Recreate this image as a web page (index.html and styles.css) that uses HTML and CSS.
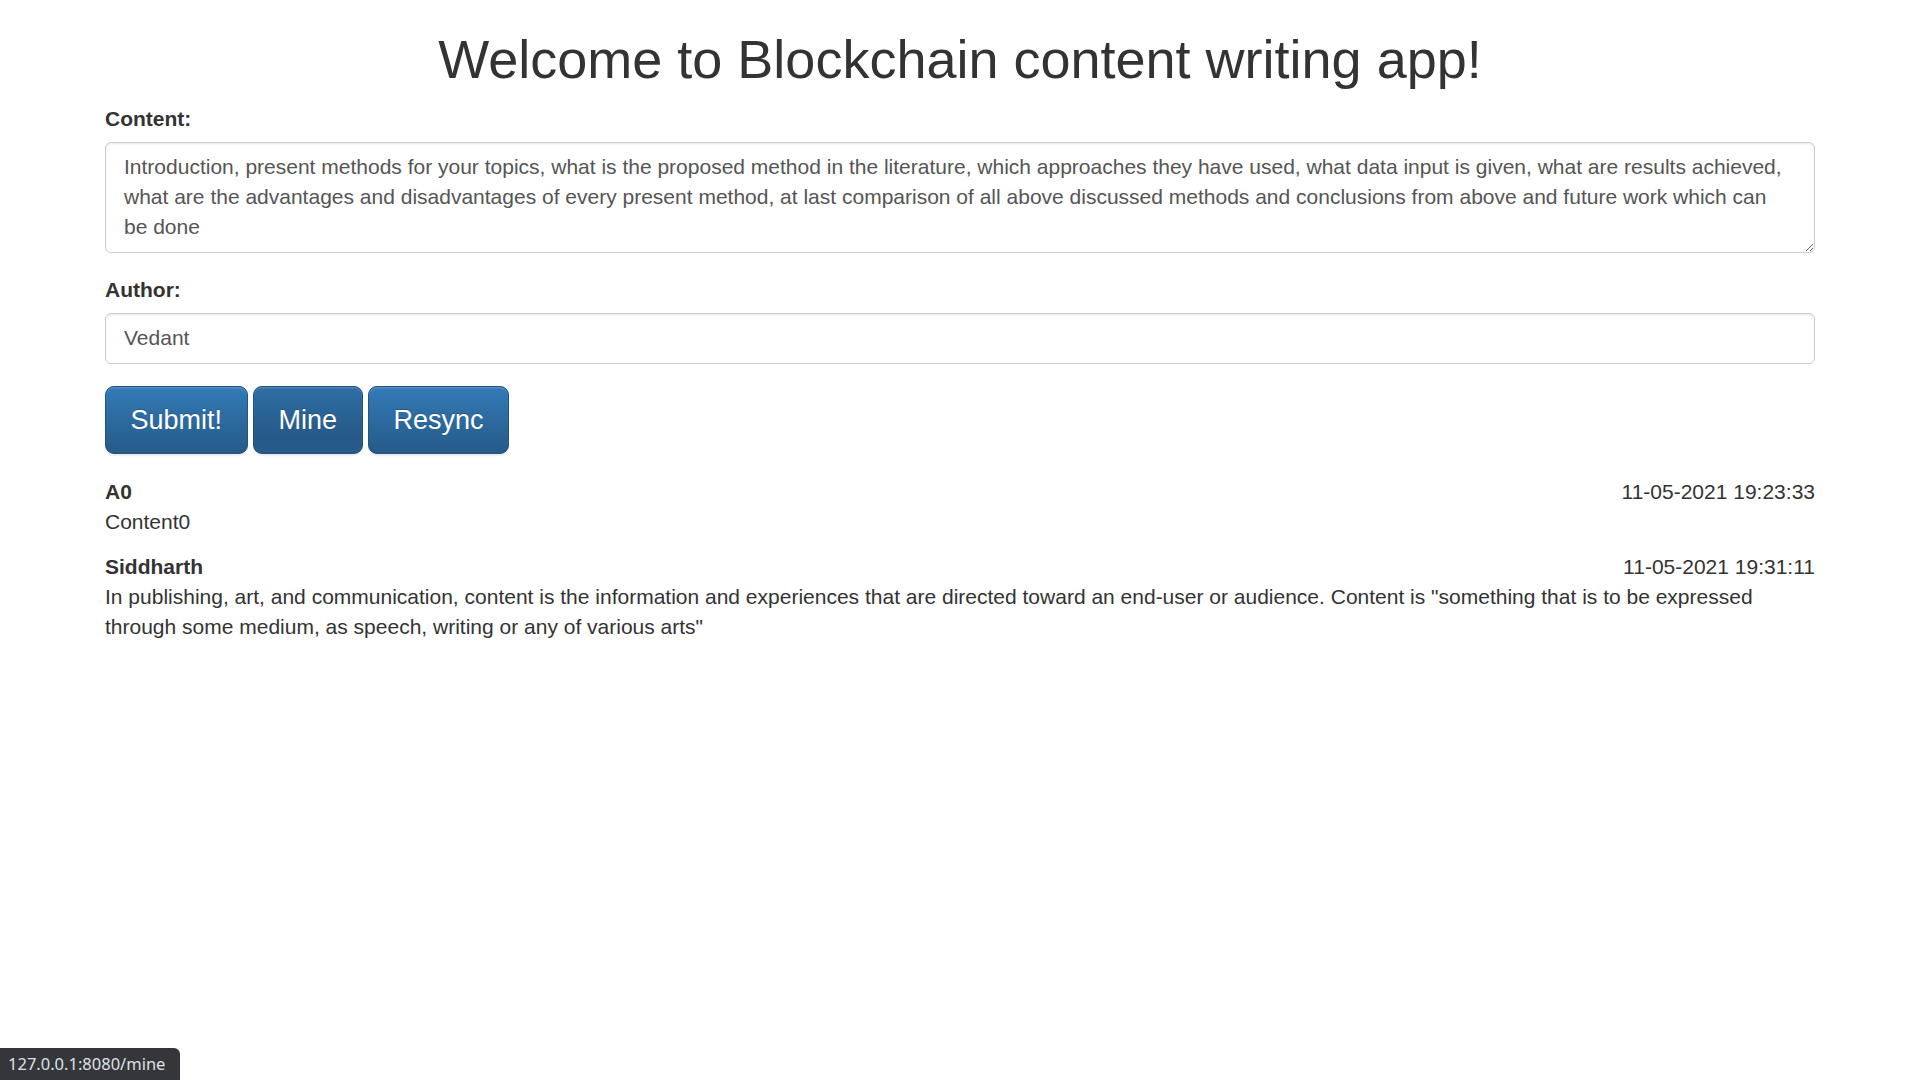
FILE: index.html
```html
<!DOCTYPE html>
<html lang="en">
<head>
<meta charset="utf-8">
<title>Blockchain content writing app</title>
<link rel="stylesheet" href="styles.css">
</head>
<body>
<div class="container">
  <h1 class="title">Welcome to Blockchain content writing app!</h1>
  <form class="post-form">
    <div class="form-group">
      <label class="label" for="content">Content:</label>
      <textarea id="content" class="form-control textarea" rows="3">Introduction, present methods for your topics, what is the proposed method in the literature, which approaches they have used, what data input is given, what are results achieved, what are the advantages and disadvantages of every present method, at last comparison of all above discussed methods and conclusions from above and future work which can be done</textarea>
    </div>
    <div class="form-group">
      <label class="label" for="author">Author:</label>
      <input id="author" class="form-control input" type="text" value="Vedant">
    </div>
    <div class="btn-row">
      <a class="btn" href="#">Submit!</a>
      <a class="btn btn-hover" href="#">Mine</a>
      <a class="btn" href="#">Resync</a>
    </div>
  </form>
  <div class="posts">
    <div class="post">
      <div class="post-header">
        <span class="post-name">A0</span>
        <span class="post-date">11-05-2021 19:23:33</span>
      </div>
      <p class="post-body">Content0</p>
    </div>
    <div class="post">
      <div class="post-header">
        <span class="post-name">Siddharth</span>
        <span class="post-date">11-05-2021 19:31:11</span>
      </div>
      <p class="post-body">In publishing, art, and communication, content is the information and experiences that are directed toward an end-user or audience. Content is "something that is to be expressed through some medium, as speech, writing or any of various arts"</p>
    </div>
  </div>
</div>
<div class="status-bubble">127.0.0.1:8080/mine</div>
</body>
</html>
```
FILE: styles.css
```css
* {
  box-sizing: border-box;
}
html, body {
  margin: 0;
  padding: 0;
  background: #fff;
}
body {
  font-family: "Liberation Sans", Arial, Helvetica, sans-serif;
  font-size: 21px;
  line-height: 30px;
  color: #333;
}
.container {
  width: 1755px;
  margin: 0 auto;
  padding: 0 22.5px;
}
.title {
  font-size: 54px;
  font-weight: 500;
  line-height: 1.1;
  margin: 30px 0 15px;
  text-align: center;
  color: #333;
}
.form-group {
  margin-bottom: 22.5px;
}
.label {
  display: inline-block;
  max-width: 100%;
  margin-bottom: 7.5px;
  font-weight: bold;
}
.form-control {
  display: block;
  width: 100%;
  padding: 9px 18px;
  font-family: "Liberation Sans", Arial, Helvetica, sans-serif;
  font-size: 21px;
  line-height: 30px;
  color: #555;
  background: #fff;
  border: 1.5px solid #ccc;
  border-radius: 6px;
  box-shadow: inset 0 1.5px 1.5px rgba(0, 0, 0, .075);
  outline: none;
  margin: 0;
}
.textarea {
  height: 111px;
  padding-right: 27px;
  resize: vertical;
  overflow: hidden;
}
.input {
  height: 51px;
}
.btn-row {
  display: flex;
  gap: 5.5px;
  margin-bottom: 22.5px;
}
.btn {
  display: inline-block;
  padding: 15px 24.5px;
  font-size: 27px;
  line-height: 36px;
  color: #fff;
  text-decoration: none;
  border: 1.5px solid #245580;
  border-radius: 9px;
  background-color: #265a88;
  background-image: linear-gradient(to bottom, #337ab7 0, #265a88 100%);
  text-shadow: 0 -1.5px 0 rgba(0, 0, 0, .2);
  box-shadow: inset 0 1.5px 0 rgba(255, 255, 255, .15), 0 1.5px 1.5px rgba(0, 0, 0, .075);
}
.btn-hover {
  background-image: linear-gradient(to bottom, #2e6da4 0, #265a88 75%);
}
.post-header {
  display: flex;
  justify-content: space-between;
}
.post-name {
  font-weight: bold;
}
.post-body {
  margin: 0 0 15px;
}
.status-bubble {
  position: fixed;
  left: 0;
  bottom: 0;
  height: 32px;
  padding: 0 15px 0 8px;
  background: #35363a;
  color: #dfe1e5;
  font-family: "Noto Sans", "Open Sans", sans-serif;
  font-size: 16.5px;
  line-height: 32px;
  border-top-right-radius: 6px;
}
```
